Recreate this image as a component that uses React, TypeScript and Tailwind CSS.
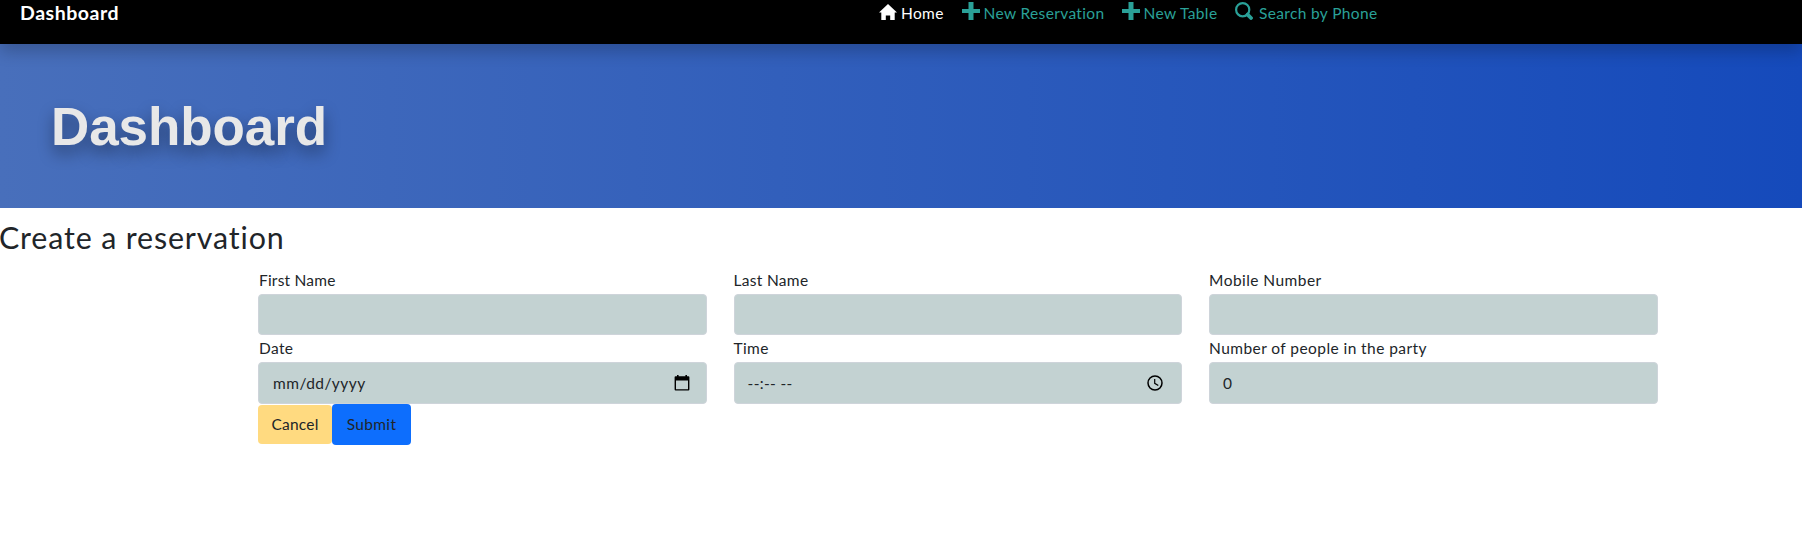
import type { ReactNode } from 'react';

const inputBase =
  'flex items-center rounded border border-[#ced4da] bg-[#c3d2d2] px-[13px] text-[#212529]';

function Text({ children, className = '' }: { children: ReactNode; className?: string }) {
  return <span className={`whitespace-pre ${className}`}>{children}</span>;
}

function HomeIcon() {
  return (
    <svg viewBox="0 0 18 16" className="mt-1 mr-1 h-4 w-[18px] shrink-0 fill-current">
      <path d="M9 0L0 8.6h2.3V16h4.5v-4.6h4.4V16h4.5V8.6H18z" />
    </svg>
  );
}

function PlusIcon() {
  return (
    <svg viewBox="0 0 18 18" className="mt-0.5 mr-1 h-[18px] w-[18px] shrink-0 fill-current">
      <path d="M6.5 0v7H0v4h6.5v7h5v-7H18V7h-6.5V0z" />
    </svg>
  );
}

function SearchIcon() {
  return (
    <svg viewBox="0 0 18 18" className="mt-0.5 mr-1.5 h-[18px] w-[18px] shrink-0" fill="none" stroke="currentColor">
      <circle cx="7.7" cy="7.7" r="6.6" strokeWidth="2.2" />
      <path d="M12.6 12.6l3.4 3.4" strokeWidth="3.8" strokeLinecap="round" />
    </svg>
  );
}

function CalendarIcon() {
  return (
    <svg viewBox="0 0 16 16" className="h-4 w-4">
      <path d="M3 0h1.6v1.2h6.8V0H13v1.2h1.4q1 0 1 1v12.3q0 1.1-1 1.1H1.6q-1 0-1-1.1V2.2q0-1 1-1H3zM2 5.4V14.3h12V5.4z" fillRule="evenodd" />
    </svg>
  );
}

function ClockIcon() {
  return (
    <svg viewBox="0 0 16 16" className="h-4 w-4" fill="none" stroke="black">
      <circle cx="8" cy="8" r="7" strokeWidth="1.5" />
      <path d="M7.7 4v4.3l3.6 2.2" strokeWidth="1.2" />
    </svg>
  );
}

type FieldProps = { label: string; children?: ReactNode; height?: string; labelClass?: string };

function Field({ label, children, height = 'h-[41px]', labelClass = '' }: FieldProps) {
  return (
    <div>
      <label className="flex h-[27px] items-center pb-0.5"><Text className={labelClass}>{label}</Text></label>
      <div className={`${inputBase} ${height}`}>{children}</div>
    </div>
  );
}

export default function App() {
  return (
    <div className="h-[536px] overflow-hidden bg-white font-['Lato',sans-serif] text-[15.5px] tracking-[0.35px] leading-6 text-[#212529]">
      <nav className="relative flex h-11 bg-black text-[#2aa198] shadow-[0_8px_16px_rgba(0,0,0,0.2)]">
        <Text className="w-[879px] pl-5 pt-px text-[19.5px] font-bold tracking-[0.55px] text-white">Dashboard</Text>
        <a className="flex w-[82.6px] text-white"><HomeIcon /><Text className="pt-px">Home</Text></a>
        <a className="flex w-40"><PlusIcon /><Text className="pt-px">New Reservation</Text></a>
        <a className="flex w-[113.4px]"><PlusIcon /><Text className="pt-px">New Table</Text></a>
        <a className="flex"><SearchIcon /><Text className="pt-px">Search by Phone</Text></a>
      </nav>
      <header className="flex h-41 items-center bg-linear-[90deg,#486fbb,#154abb] pl-[51px]">
        <h1 className="font-['Liberation_Sans',sans-serif] text-[53px] leading-none font-bold tracking-[-0.1px] text-[#e8e8e8] [text-shadow:0_8px_16px_rgba(0,0,0,0.4)]">Dashboard</h1>
      </header>
      <h2 className="h-[59px] pt-3 text-[30.4px] leading-[34px] tracking-[0.85px]"><Text className="-ml-px">Create a reservation</Text></h2>
      <form className="pr-[144px] pl-[258px]">
        <div className="grid grid-cols-3 gap-x-[26.6px]">
          <Field label="First Name" labelClass="pl-px tracking-[0.2px]" />
          <Field label="Last Name" labelClass="tracking-[0.3px]" />
          <Field label="Mobile Number" labelClass="tracking-[0.45px]" />
          <Field label="Date" height="h-[42px]" labelClass="pl-px"><Text className="flex-1 pl-px tracking-[0.45px]">mm/dd/yyyy</Text><span className="mr-[3px]"><CalendarIcon /></span></Field>
          <Field label="Time" height="h-[42px]"><Text className="flex-1">--:-- --</Text><span className="mr-[5px]"><ClockIcon /></span></Field>
          <Field label="Number of people in the party" height="h-[42px]" labelClass="tracking-[0.43px]"><Text>0</Text></Field>
        </div>
        <div className="flex items-center">
          <button type="button" className="h-[39px] w-[74px] rounded bg-[#ffda80] pb-0.5"><Text className="tracking-[0.2px]">Cancel</Text></button>
          <button type="button" className="h-[41px] w-[79px] rounded bg-[#0d6efd] pb-0.5"><Text>Submit</Text></button>
        </div>
      </form>
    </div>
  );
}
